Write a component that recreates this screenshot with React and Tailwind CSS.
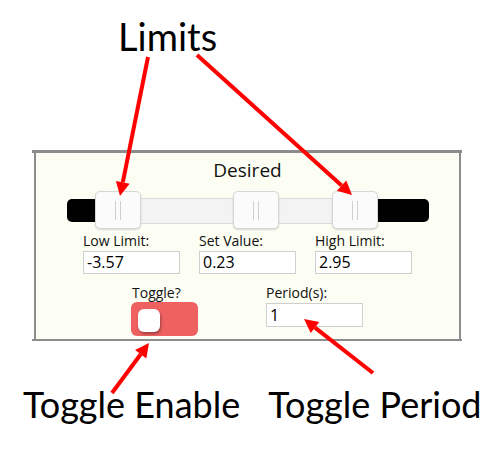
import React from "react";

const ui = { fontFamily: '"Open Sans", "Noto Sans", sans-serif' };
const ann = { fontFamily: 'Lato, "Open Sans", sans-serif' };

function Handle({ className }) {
  return (
    <div
      className={`absolute top-0 h-[38px] w-[46px] rounded-[5px] border border-[#d6d6d6] bg-[#fbfbfb] shadow-[0_1px_2px_rgba(0,0,0,0.15)] flex items-center justify-center gap-[4px] ${className}`}
    >
      <div className="h-[19px] w-px bg-[#cfcfcf]" />
      <div className="h-[19px] w-px bg-[#cfcfcf]" />
    </div>
  );
}

function Field({ label, value }) {
  return (
    <div className="flex flex-col">
      <div className="text-[14px] leading-[18px] text-[#111]">{label}</div>
      <div className="mt-[1px] h-[23px] w-[97px] border border-[#cfcfcf] bg-white pl-[3px] text-[16px] leading-[21px] text-black">
        {value}
      </div>
    </div>
  );
}

export default function App() {
  return (
    <div className="relative h-[450px] w-[503px] overflow-hidden bg-white">
      <div style={ann} className="pl-[118px] pt-[17px] text-[38px] leading-none text-black">
        Limits
      </div>

      <div className="ml-[32px] mt-[95px] w-[430px] border-t-[3px] border-b-[2px] border-[#8c8c8c]" style={ui}>
        <div className="ml-[2px] mr-[1px] border-l-2 border-r-2 border-[#8c8c8c] bg-[#fcfef3] pb-[3px]">
          <div className="pt-[4px] text-center text-[19px] leading-[26px] text-[#111]">Desired</div>

          <div className="relative mt-[8px] h-[38px]">
            <div className="absolute left-[31px] top-[8px] h-[23px] w-[362px] rounded-[5px] bg-black" />
            <div className="absolute left-[82px] top-[7px] h-[26px] w-[237px] border border-[#dcdcdc] bg-[#f3f3f3]" />
            <Handle className="left-[59px]" />
            <Handle className="left-[197px]" />
            <Handle className="left-[296px]" />
          </div>

          <div className="mt-[3px] grid grid-cols-[97px_97px_97px] gap-x-[19px] pl-[47px]">
            <Field label="Low Limit:" value="-3.57" />
            <Field label="Set Value:" value="0.23" />
            <Field label="High Limit:" value="2.95" />
          </div>

          <div className="mt-[10px] flex pl-[95px]">
            <div className="flex w-[135px] flex-col">
              <div className="pl-[1px] text-[14px] leading-[18px] text-[#111]">Toggle?</div>
              <div className="h-[34px] w-[67px] rounded-[6px] bg-[#ef6161] pl-[7px] pt-[7px]">
                <div className="h-[23px] w-[22px] rounded-[6px] bg-white shadow-[1px_2px_3px_rgba(0,0,0,0.35)]" />
              </div>
            </div>
            <div className="flex flex-col">
              <div className="text-[14px] leading-[18px] text-[#111]">Period(s):</div>
              <div className="mt-[1px] h-[24px] w-[97px] border border-[#cfcfcf] bg-white pl-[3px] text-[16px] leading-[22px] text-black">
                1
              </div>
            </div>
          </div>
        </div>
      </div>

      <div style={ann} className="mt-[45px] flex text-[36px] leading-none text-black">
        <div className="pl-[23px]">Toggle Enable</div>
        <div className="pl-[28px]">Toggle Period</div>
      </div>

      <svg className="pointer-events-none absolute left-0 top-0" width="503" height="450" viewBox="0 0 503 450">
        <g stroke="#ff0000" strokeWidth="4" fill="#ff0000">
          <line x1="148" y1="57" x2="122.8" y2="182.3" />
          <polygon points="120,196 129.6,183.7 115.9,180.9" stroke="none" />
          <line x1="197" y1="55" x2="341.6" y2="185.6" />
          <polygon points="352,195 336.9,190.8 346.3,180.4" stroke="none" />
          <line x1="112" y1="393" x2="140.7" y2="354.3" />
          <polygon points="149,343 146.3,358.5 135.1,350.1" stroke="none" />
          <line x1="373" y1="373" x2="315" y2="327.6" />
          <polygon points="304,319 319.3,322.1 310.7,333.1" stroke="none" />
        </g>
      </svg>
    </div>
  );
}
